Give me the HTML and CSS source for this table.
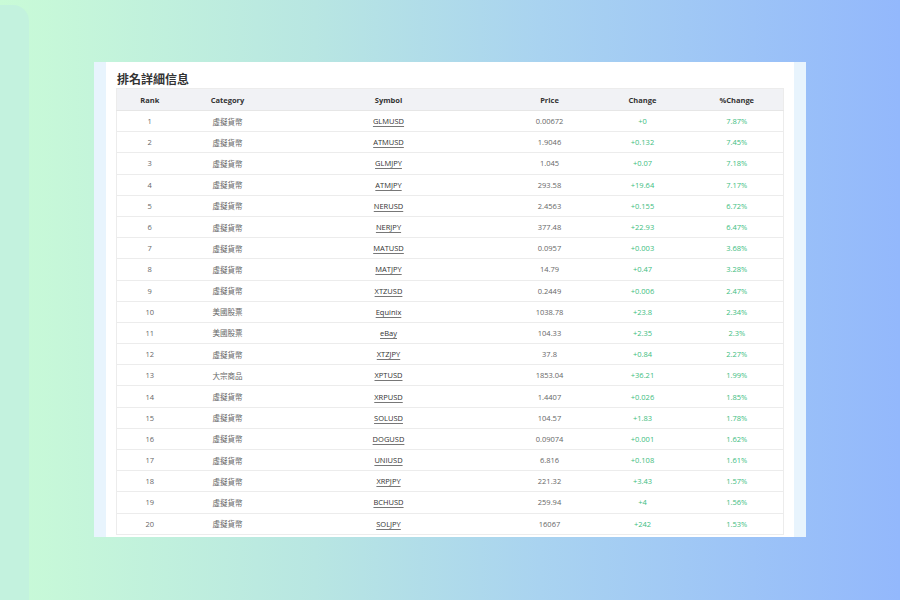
FILE: index.html
```html
<!DOCTYPE html>
<html lang="zh-Hant">
<head>
<meta charset="utf-8">
<title>排名詳細信息</title>
<link rel="stylesheet" href="styles.css">
</head>
<body>
<div class="side-shape"></div>
<div class="panel">
  <div class="card">
    <h2 class="title">排名詳細信息</h2>
    <table class="rank-table">
      <colgroup>
        <col class="c-rank"><col class="c-cat"><col class="c-sym"><col class="c-price"><col class="c-chg"><col class="c-pct">
      </colgroup>
      <thead>
        <tr><th>Rank</th><th>Category</th><th>Symbol</th><th>Price</th><th>Change</th><th>%Change</th></tr>
      </thead>
      <tbody>
        <tr><td>1</td><td>虛擬貨幣</td><td><a class="sym">GLMUSD</a></td><td>0.00672</td><td class="up">+0</td><td class="up">7.87%</td></tr>
        <tr><td>2</td><td>虛擬貨幣</td><td><a class="sym">ATMUSD</a></td><td>1.9046</td><td class="up">+0.132</td><td class="up">7.45%</td></tr>
        <tr><td>3</td><td>虛擬貨幣</td><td><a class="sym">GLMJPY</a></td><td>1.045</td><td class="up">+0.07</td><td class="up">7.18%</td></tr>
        <tr><td>4</td><td>虛擬貨幣</td><td><a class="sym">ATMJPY</a></td><td>293.58</td><td class="up">+19.64</td><td class="up">7.17%</td></tr>
        <tr><td>5</td><td>虛擬貨幣</td><td><a class="sym">NERUSD</a></td><td>2.4563</td><td class="up">+0.155</td><td class="up">6.72%</td></tr>
        <tr><td>6</td><td>虛擬貨幣</td><td><a class="sym">NERJPY</a></td><td>377.48</td><td class="up">+22.93</td><td class="up">6.47%</td></tr>
        <tr><td>7</td><td>虛擬貨幣</td><td><a class="sym">MATUSD</a></td><td>0.0957</td><td class="up">+0.003</td><td class="up">3.68%</td></tr>
        <tr><td>8</td><td>虛擬貨幣</td><td><a class="sym">MATJPY</a></td><td>14.79</td><td class="up">+0.47</td><td class="up">3.28%</td></tr>
        <tr><td>9</td><td>虛擬貨幣</td><td><a class="sym">XTZUSD</a></td><td>0.2449</td><td class="up">+0.006</td><td class="up">2.47%</td></tr>
        <tr><td>10</td><td>美國股票</td><td><a class="sym">Equinix</a></td><td>1038.78</td><td class="up">+23.8</td><td class="up">2.34%</td></tr>
        <tr><td>11</td><td>美國股票</td><td><a class="sym">eBay</a></td><td>104.33</td><td class="up">+2.35</td><td class="up">2.3%</td></tr>
        <tr><td>12</td><td>虛擬貨幣</td><td><a class="sym">XTZJPY</a></td><td>37.8</td><td class="up">+0.84</td><td class="up">2.27%</td></tr>
        <tr><td>13</td><td>大宗商品</td><td><a class="sym">XPTUSD</a></td><td>1853.04</td><td class="up">+36.21</td><td class="up">1.99%</td></tr>
        <tr><td>14</td><td>虛擬貨幣</td><td><a class="sym">XRPUSD</a></td><td>1.4407</td><td class="up">+0.026</td><td class="up">1.85%</td></tr>
        <tr><td>15</td><td>虛擬貨幣</td><td><a class="sym">SOLUSD</a></td><td>104.57</td><td class="up">+1.83</td><td class="up">1.78%</td></tr>
        <tr><td>16</td><td>虛擬貨幣</td><td><a class="sym">DOGUSD</a></td><td>0.09074</td><td class="up">+0.001</td><td class="up">1.62%</td></tr>
        <tr><td>17</td><td>虛擬貨幣</td><td><a class="sym">UNIUSD</a></td><td>6.816</td><td class="up">+0.108</td><td class="up">1.61%</td></tr>
        <tr><td>18</td><td>虛擬貨幣</td><td><a class="sym">XRPJPY</a></td><td>221.32</td><td class="up">+3.43</td><td class="up">1.57%</td></tr>
        <tr><td>19</td><td>虛擬貨幣</td><td><a class="sym">BCHUSD</a></td><td>259.94</td><td class="up">+4</td><td class="up">1.56%</td></tr>
        <tr><td>20</td><td>虛擬貨幣</td><td><a class="sym">SOLJPY</a></td><td>16067</td><td class="up">+242</td><td class="up">1.53%</td></tr>
      </tbody>
    </table>
  </div>
</div>
</body>
</html>
```
FILE: styles.css
```css
html, body {
  margin: 0;
  padding: 0;
  width: 900px;
  height: 600px;
  overflow: hidden;
}
body {
  position: relative;
  background: linear-gradient(to right, #c9fbd7 0%, #b8e6e2 35%, #a9d3f0 60%, #93b8fc 100%);
  font-family: "Open Sans", "Noto Sans CJK TC", sans-serif;
  padding-top: 62px;
  box-sizing: border-box;
}
.side-shape {
  position: absolute;
  left: 0;
  top: 5px;
  width: 29px;
  height: 600px;
  border-top-right-radius: 16px;
  background: #c3f2de;
}
.panel {
  position: relative;
  margin-left: 94px;
  width: 712px;
  height: 475px;
  box-sizing: border-box;
  padding: 0 12px;
  background: #e8f4fd;
  overflow: hidden;
}
.card {
  background: #fff;
  height: 100%;
  box-sizing: border-box;
  padding: 8px 11px 0 10px;
}
.title {
  margin: 0 0 1px 1px;
  font-family: "Noto Sans CJK TC", sans-serif;
  font-size: 12px;
  line-height: 17px;
  font-weight: 700;
  color: #333;
}
.rank-table {
  width: 667px;
  border-collapse: collapse;
  table-layout: fixed;
  font-size: 7.5px;
  border: 1px solid #ececec;
}
.c-rank { width: 66px; }
.c-cat { width: 90px; }
.c-sym { width: 232px; }
.c-price { width: 90px; }
.c-chg { width: 96px; }
.c-pct { width: 93px; }
.rank-table th {
  background: #f1f2f5;
  color: #333;
  font-weight: 700;
  height: 21px;
  padding: 0;
  text-align: center;
  border-bottom: 1px solid #e6e6e6;
}
.rank-table td {
  height: 20.2px;
  padding: 0;
  text-align: center;
  color: #666;
  border-bottom: 1px solid #ececec;
  font-family: "Open Sans", "Noto Sans CJK TC", sans-serif;
}
.rank-table td.up {
  color: #3cbd80;
}
.sym {
  color: #333;
  text-decoration: underline;
  text-decoration-color: #777;
  text-underline-offset: 1.5px;
}
```
